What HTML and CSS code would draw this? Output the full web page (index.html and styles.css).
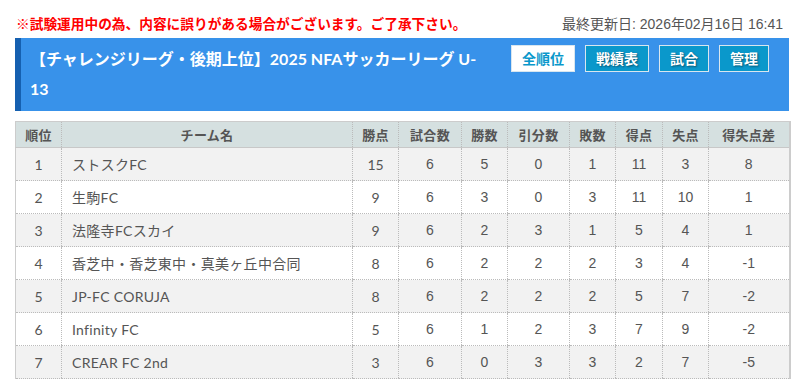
FILE: index.html
```html
<!DOCTYPE html>
<html lang="ja">
<head>
<meta charset="utf-8">
<link rel="stylesheet" href="styles.css">
</head>
<body>
<div class="page">
  <div class="topline">
    <span class="notice">※試験運用中の為、内容に誤りがある場合がございます。ご了承下さい。</span>
    <span class="updated">最終更新日: 2026年02月16日 16:41</span>
  </div>
  <div class="banner">
    <h1 class="title">【チャレンジリーグ・後期上位】2025 NFAサッカーリーグ U-13</h1>
    <div class="btns">
      <a class="btn btn-active">全順位</a>
      <a class="btn">戦績表</a>
      <a class="btn">試合</a>
      <a class="btn">管理</a>
    </div>
  </div>
  <table class="standings">
    <colgroup>
      <col class="c46"><col class="c291"><col class="c46"><col class="c63"><col class="c46"><col class="c62"><col class="c46"><col class="c47"><col class="c46"><col class="c81">
    </colgroup>
    <thead>
      <tr><th>順位</th><th>チーム名</th><th>勝点</th><th>試合数</th><th>勝数</th><th>引分数</th><th>敗数</th><th>得点</th><th>失点</th><th>得失点差</th></tr>
    </thead>
    <tbody>
      <tr><td class="l">1</td><td class="l name">ストスクFC</td><td class="l">15</td><td>6</td><td>5</td><td>0</td><td>1</td><td>11</td><td>3</td><td>8</td></tr>
      <tr><td class="l">2</td><td class="l name">生駒FC</td><td class="l">9</td><td>6</td><td>3</td><td>0</td><td>3</td><td>11</td><td>10</td><td>1</td></tr>
      <tr><td class="l">3</td><td class="l name">法隆寺FCスカイ</td><td class="l">9</td><td>6</td><td>2</td><td>3</td><td>1</td><td>5</td><td>4</td><td>1</td></tr>
      <tr><td class="l">4</td><td class="l name">香芝中・香芝東中・真美ヶ丘中合同</td><td class="l">8</td><td>6</td><td>2</td><td>2</td><td>2</td><td>3</td><td>4</td><td>-1</td></tr>
      <tr><td class="l">5</td><td class="l name">JP-FC CORUJA</td><td class="l">8</td><td>6</td><td>2</td><td>2</td><td>2</td><td>5</td><td>7</td><td>-2</td></tr>
      <tr><td class="l">6</td><td class="l name">Infinity FC</td><td class="l">5</td><td>6</td><td>1</td><td>2</td><td>3</td><td>7</td><td>9</td><td>-2</td></tr>
      <tr><td class="l">7</td><td class="l name">CREAR FC 2nd</td><td class="l">3</td><td>6</td><td>0</td><td>3</td><td>3</td><td>2</td><td>7</td><td>-5</td></tr>
    </tbody>
  </table>
</div>
</body>
</html>
```

FILE: styles.css
```css
* { box-sizing: border-box; }
html, body { margin: 0; padding: 0; background: #fff; }
body {
  font-family: "Lato", "Noto Sans CJK JP", sans-serif;
  color: #555;
}
.page { padding: 0 11px 0 15px; }
.topline {
  display: flex;
  justify-content: space-between;
  align-items: center;
  height: 22px;
  margin-top: 12px;
  margin-bottom: 4px;
}
.notice {
  color: #f00;
  font-weight: bold;
  font-size: 13.7px;
  font-family: "Noto Sans CJK JP", sans-serif;
  padding-left: 1px;
}
.updated {
  font-size: 14px;
  color: #555;
  font-family: "Liberation Sans", "Noto Sans CJK JP", sans-serif;
  margin-right: 6px;
}
.banner {
  display: flex;
  align-items: flex-start;
  background: #3892ea;
  border-left: 6px solid #1560b0;
  width: 774px;
  height: 73px;
  padding: 6px 20px 7px 9px;
}
.title {
  flex: 1;
  margin: 0;
  color: #fff;
  font-size: 16px;
  font-weight: bold;
  line-height: 30px;
  font-family: "Lato", "Noto Sans CJK JP", sans-serif;
  padding-right: 20px;
}
.btns {
  display: flex;
  gap: 10px;
  margin-top: 1px;
}
.btn {
  display: block;
  height: 27px;
  line-height: 25px;
  padding: 0 10px;
  font-size: 14px;
  font-weight: bold;
  color: #fff;
  background: #0a98cb;
  border: 1px solid #d8e6ef;
  text-shadow: 1px 1px 2px rgba(0,0,0,.45);
  font-family: "Noto Sans CJK JP", sans-serif;
}
.btn-active {
  background: #fff;
  color: #0a98cb;
  text-shadow: none;
}
.standings {
  margin-top: 10px;
  width: 774px;
  table-layout: fixed;
  border-collapse: collapse;
  border-top: 1px solid #ccc;
  border-left: 1px solid #ccc;
  border-right: 2px solid #ccc;
  font-size: 14px;
}
.c46 { width: 46px; }
.c291 { width: 291px; }
.c63 { width: 63px; }
.c62 { width: 62px; }
.c47 { width: 47px; }
.c81 { width: 81px; }
.standings thead tr { height: 26px; background: #d5e0e0; }
.standings th {
  font-size: 13px;
  font-weight: bold;
  color: #555;
  font-family: "Noto Sans CJK JP", sans-serif;
  border-left: 1px dotted #bbb;
  border-bottom: 1px solid #c8c8c8;
  padding: 0;
  letter-spacing: 0.3px;
}
.standings th:first-child { border-left: none; }
.standings tbody tr { height: 33px; }
.standings tbody tr:nth-child(odd) { background: #f2f2f2; }
.standings tbody tr:nth-child(even) { background: #fff; }
.standings td {
  text-align: center;
  padding: 0;
  color: #555;
  font-family: "Liberation Sans", "Noto Sans CJK JP", sans-serif;
  border-left: 1px dotted #bbb;
  border-bottom: 1px dotted #bbb;
}
.standings td:first-child { border-left: none; }
.standings td.l { font-family: "Lato", "Noto Sans CJK JP", sans-serif; }
.standings td.name { text-align: left; padding-left: 10px; letter-spacing: 0.3px; }
```
